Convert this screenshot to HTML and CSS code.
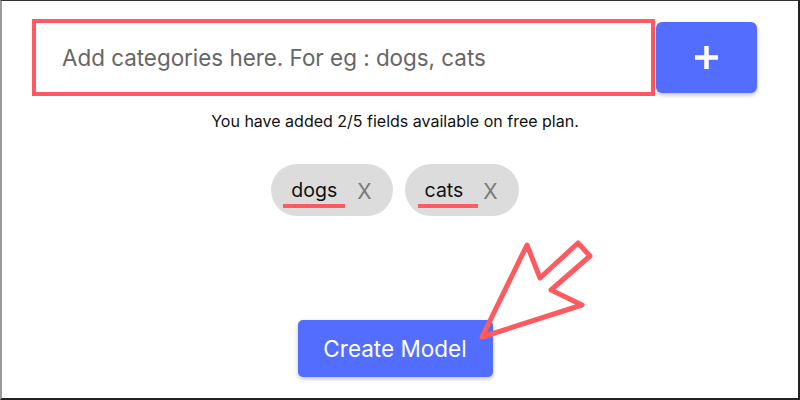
FILE: index.html
```html
<!DOCTYPE html>
<html>
<head>
<meta charset="utf-8">
<link rel="stylesheet" href="styles.css">
</head>
<body>
<div class="frame">
  <div class="input-row">
    <div class="cat-input">Add categories here. For eg : dogs, cats</div>
    <button class="add-btn" aria-label="add">
      <svg width="25" height="25" viewBox="0 0 25 25"><path d="M12.5 1v23M1 12.5h23" stroke="#fff" stroke-width="4.5" fill="none"/></svg>
    </button>
  </div>
  <p class="info">You have added 2/5 fields available on free plan.</p>
  <div class="chips">
    <div class="chip"><span class="chip-label mark-dogs">dogs</span><span class="chip-x">X</span></div>
    <div class="chip"><span class="chip-label mark-cats">cats</span><span class="chip-x">X</span></div>
  </div>
  <button class="create-btn">Create Model</button>
  <svg class="arrow" width="800" height="400" viewBox="0 0 800 400">
    <polygon points="482,337 527,245 540,278 578,243 590,256 551,290 582,305" fill="none" stroke="#ff5a5f" stroke-width="5" stroke-linejoin="round"/>
  </svg>
</div>
</body>
</html>
```
FILE: styles.css
```css
* { box-sizing: border-box; }
html, body { margin: 0; padding: 0; background: #fff; }
body { font-family: Inter, "Noto Sans", sans-serif; }
.frame {
  position: relative;
  width: 800px;
  height: 400px;
  border-top: 1px solid #333;
  border-left: 2px solid #999;
  border-right: 2px solid #222;
  border-bottom: 2px solid #222;
  display: flex;
  flex-direction: column;
  align-items: center;
  overflow: hidden;
}
.input-row {
  align-self: stretch;
  display: flex;
  align-items: center;
  padding-left: 30px;
  margin-top: 18px;
}
.cat-input {
  width: 623px;
  height: 77px;
  border: 4px solid #ff5a5f;
  display: flex;
  align-items: center;
  padding-left: 26px;
  padding-bottom: 1px;
  font-size: 22.4px;
  color: #666;
}
.add-btn {
  width: 101px;
  height: 71px;
  border: none;
  border-radius: 6px;
  background: #536dfe;
  box-shadow: 0 2px 4px rgba(0,0,0,0.25);
  display: flex;
  align-items: center;
  justify-content: center;
  padding: 0;
  margin-left: 1px;
}
.info {
  margin: 15px 0 0 -10px;
  font-size: 16px;
  color: #111;
  line-height: 20px;
}
.chips {
  display: flex;
  gap: 12px;
  margin-top: 33px;
  margin-left: -10px;
}
.chip {
  height: 52px;
  border-radius: 26px;
  background: #dcdcdc;
  display: flex;
  align-items: flex-start;
  padding: 0 21px 0 20px;
}
.chip-label {
  position: relative;
  display: inline-block;
  font-size: 19.5px;
  color: #111;
  line-height: 22px;
  margin-top: 15px;
}
.chip-label::after {
  content: "";
  position: absolute;
  top: 25px;
  height: 4px;
  background: #ff5a5f;
}
.mark-dogs::after { left: -8px; right: -8px; }
.mark-cats::after { left: -7px; right: -15px; }
.chip-x {
  font-size: 21px;
  line-height: 24px;
  color: #7a7a7a;
  margin-left: 20px;
  margin-top: 16px;
}
.create-btn {
  margin-top: 104px;
  margin-left: -10px;
  width: 195px;
  height: 57px;
  border: none;
  border-radius: 5px;
  background: #536dfe;
  color: #fff;
  font-family: Inter, "Noto Sans", sans-serif;
  font-size: 22.5px;
  box-shadow: 0 2px 4px rgba(0,0,0,0.25);
}
.arrow {
  position: absolute;
  left: -2px;
  top: -1px;
  pointer-events: none;
}
```
